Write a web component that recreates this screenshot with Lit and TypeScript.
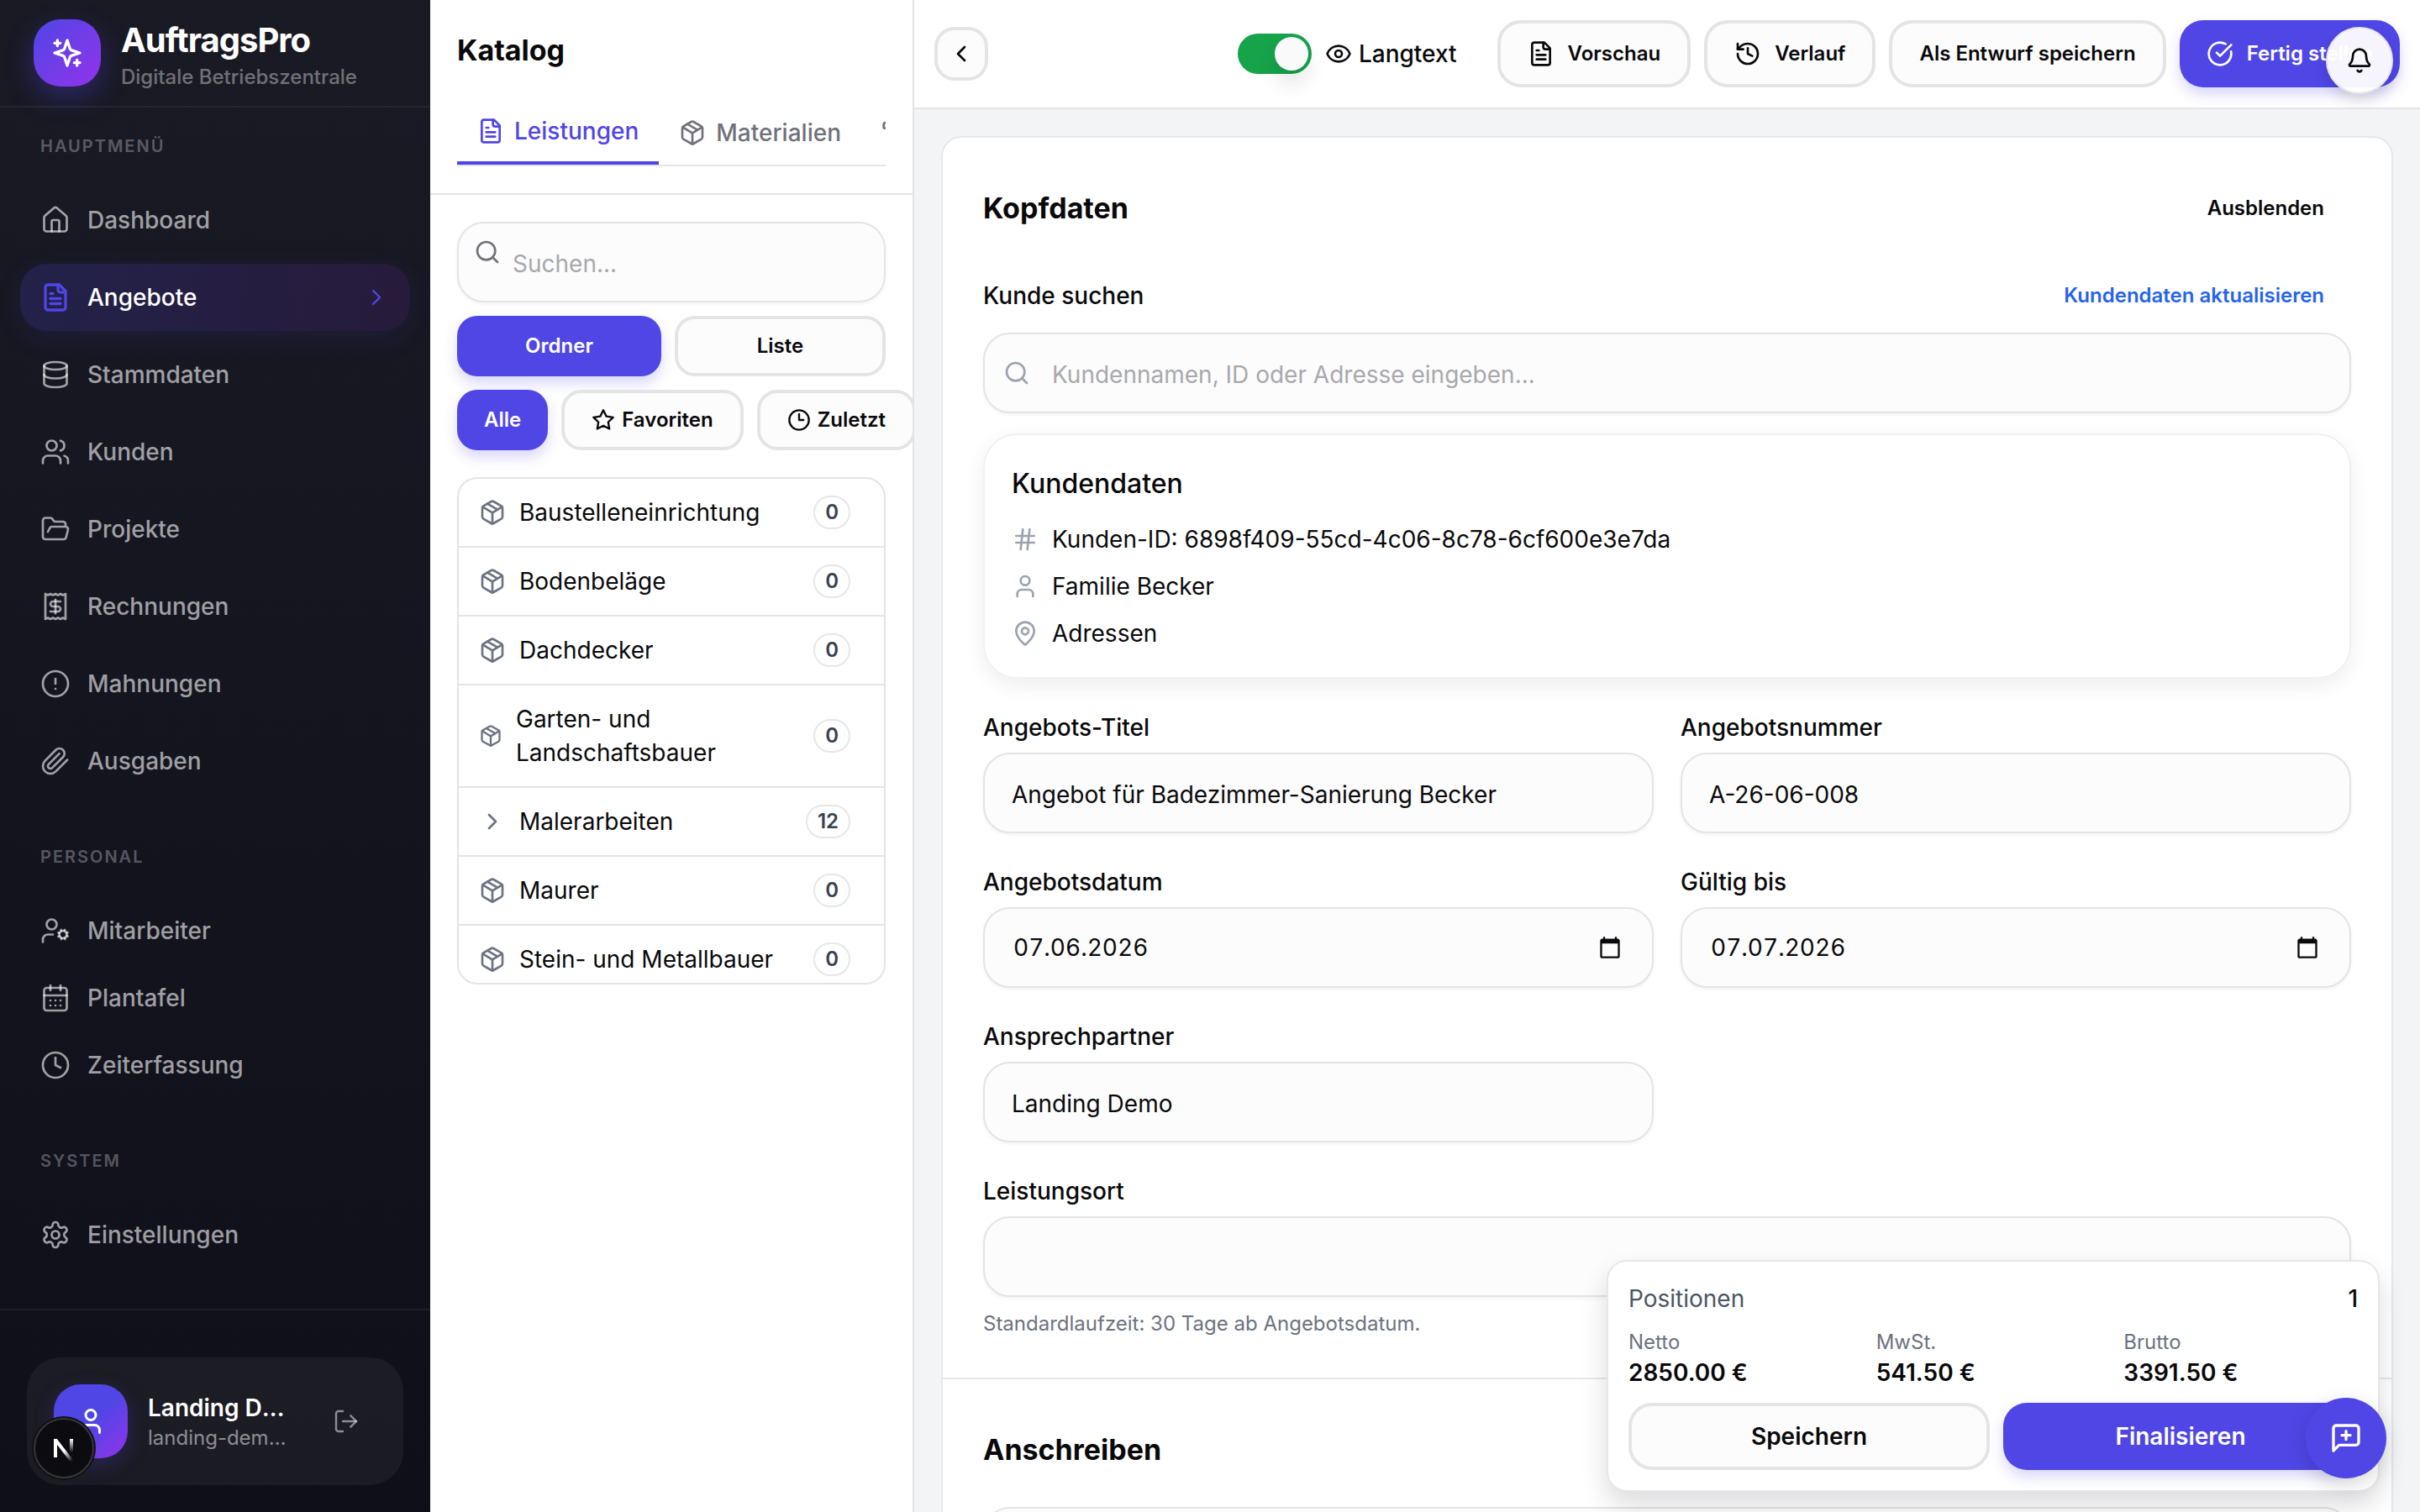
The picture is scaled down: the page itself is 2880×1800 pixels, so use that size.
import { LitElement, html, css, svg, nothing } from "lit";
import { customElement } from "lit/decorators.js";
import { classMap } from "lit/directives/class-map.js";

const shapes = {
  sparkles: svg`<path d="m12 3-1.912 5.813a2 2 0 0 1-1.275 1.275L3 12l5.813 1.912a2 2 0 0 1 1.275 1.275L12 21l1.912-5.813a2 2 0 0 1 1.275-1.275L21 12l-5.813-1.912a2 2 0 0 1-1.275-1.275L12 3Z"/><path d="M5 3v4M19 17v4M3 5h4M17 19h4"/>`,
  house: svg`<path d="M15 21v-8a1 1 0 0 0-1-1h-4a1 1 0 0 0-1 1v8"/><path d="M3 10a2 2 0 0 1 .709-1.528l7-5.999a2 2 0 0 1 2.582 0l7 5.999A2 2 0 0 1 21 10v9a2 2 0 0 1-2 2H5a2 2 0 0 1-2-2z"/>`,
  file: svg`<path d="M15 2H6a2 2 0 0 0-2 2v16a2 2 0 0 0 2 2h12a2 2 0 0 0 2-2V7Z"/><path d="M14 2v4a2 2 0 0 0 2 2h4"/><path d="M10 9H8M16 13H8M16 17H8"/>`,
  database: svg`<ellipse cx="12" cy="5" rx="9" ry="3"/><path d="M3 5V19A9 3 0 0 0 21 19V5"/><path d="M3 12A9 3 0 0 0 21 12"/>`,
  users: svg`<path d="M16 21v-2a4 4 0 0 0-4-4H6a4 4 0 0 0-4 4v2"/><circle cx="9" cy="7" r="4"/><path d="M22 21v-2a4 4 0 0 0-3-3.87"/><path d="M16 3.13a4 4 0 0 1 0 7.75"/>`,
  folder: svg`<path d="m6 14 1.5-2.9A2 2 0 0 1 9.24 10H20a2 2 0 0 1 1.94 2.5l-1.54 6a2 2 0 0 1-1.95 1.5H4a2 2 0 0 1-2-2V5a2 2 0 0 1 2-2h3.9a2 2 0 0 1 1.69.9l.81 1.2a2 2 0 0 0 1.67.9H18a2 2 0 0 1 2 2v2"/>`,
  receipt: svg`<path d="M4 2v20l2-1 2 1 2-1 2 1 2-1 2 1 2-1 2 1V2l-2 1-2-1-2 1-2-1-2 1-2-1-2 1Z"/><path d="M16 8h-6a2 2 0 1 0 0 4h4a2 2 0 1 1 0 4H8"/><path d="M12 17.5v-11"/>`,
  alert: svg`<circle cx="12" cy="12" r="10"/><path d="M12 8v4M12 16h.01"/>`,
  clip: svg`<path d="m21.44 11.05-9.19 9.19a6 6 0 0 1-8.49-8.49l8.57-8.57A4 4 0 1 1 18 8.84l-8.59 8.57a2 2 0 0 1-2.83-2.83l8.49-8.48"/>`,
  userCog: svg`<circle cx="18" cy="15" r="3"/><circle cx="9" cy="7" r="4"/><path d="M10 15H6a4 4 0 0 0-4 4v2"/><path d="m21.7 16.4-.9-.3"/><path d="m15.2 13.9-.9-.3"/><path d="m16.6 18.7.3-.9"/><path d="m19.1 12.2.3-.9"/><path d="m19.6 18.7-.4-1"/><path d="m16.8 12.3-.4-1"/><path d="m14.3 16.6 1-.4"/><path d="m20.7 13.8 1-.4"/>`,
  calendar: svg`<path d="M8 2v4"/><path d="M16 2v4"/><rect width="18" height="18" x="3" y="4" rx="2"/><path d="M3 10h18"/><path d="M8 14h.01M12 14h.01M16 14h.01M8 18h.01M12 18h.01M16 18h.01"/>`,
  clock: svg`<circle cx="12" cy="12" r="10"/><path d="M12 6v6l4 2"/>`,
  clock3: svg`<circle cx="12" cy="12" r="10"/><path d="M12 6v6h4.5"/>`,
  settings: svg`<path d="M12.22 2h-.44a2 2 0 0 0-2 2v.18a2 2 0 0 1-1 1.73l-.43.25a2 2 0 0 1-2 0l-.15-.08a2 2 0 0 0-2.73.73l-.22.38a2 2 0 0 0 .73 2.73l.15.1a2 2 0 0 1 1 1.72v.51a2 2 0 0 1-1 1.74l-.15.09a2 2 0 0 0-.73 2.73l.22.38a2 2 0 0 0 2.73.73l.15-.08a2 2 0 0 1 2 0l.43.25a2 2 0 0 1 1 1.73V20a2 2 0 0 0 2 2h.44a2 2 0 0 0 2-2v-.18a2 2 0 0 1 1-1.73l.43-.25a2 2 0 0 1 2 0l.15.08a2 2 0 0 0 2.73-.73l.22-.39a2 2 0 0 0-.73-2.73l-.15-.08a2 2 0 0 1-1-1.74v-.5a2 2 0 0 1 1-1.74l.15-.09a2 2 0 0 0 .73-2.73l-.22-.38a2 2 0 0 0-2.73-.73l-.15.08a2 2 0 0 1-2 0l-.43-.25a2 2 0 0 1-1-1.73V4a2 2 0 0 0-2-2z"/><circle cx="12" cy="12" r="3"/>`,
  user: svg`<path d="M19 21v-2a4 4 0 0 0-4-4H9a4 4 0 0 0-4 4v2"/><circle cx="12" cy="7" r="4"/>`,
  logout: svg`<path d="M9 21H5a2 2 0 0 1-2-2V5a2 2 0 0 1 2-2h4"/><path d="m16 17 5-5-5-5"/><path d="M21 12H9"/>`,
  box: svg`<path d="M11 21.73a2 2 0 0 0 2 0l7-4A2 2 0 0 0 21 16V8a2 2 0 0 0-1-1.73l-7-4a2 2 0 0 0-2 0l-7 4A2 2 0 0 0 3 8v8a2 2 0 0 0 1 1.73z"/><path d="M12 22V12"/><path d="m3.3 7 7.703 4.734a2 2 0 0 0 1.994 0L20.7 7"/><path d="m7.5 4.27 9 5.15"/>`,
  scroll: svg`<path d="M15 12h-5M15 8h-5"/><path d="M19 17V5a2 2 0 0 0-2-2H4"/><path d="M8 21h12a2 2 0 0 0 2-2v-1a1 1 0 0 0-1-1H11a1 1 0 0 0-1 1v1a2 2 0 1 1-4 0V5a2 2 0 1 0-4 0v2a1 1 0 0 0 1 1h3"/>`,
  search: svg`<circle cx="11" cy="11" r="8"/><path d="m21 21-4.3-4.3"/>`,
  star: svg`<polygon points="12 2 15.09 8.26 22 9.27 17 14.14 18.18 21.02 12 17.77 5.82 21.02 7 14.14 2 9.27 8.91 8.26 12 2"/>`,
  eye: svg`<path d="M2.062 12.348a1 1 0 0 1 0-.696 10.75 10.75 0 0 1 19.876 0 1 1 0 0 1 0 .696 10.75 10.75 0 0 1-19.876 0"/><circle cx="12" cy="12" r="3"/>`,
  history: svg`<path d="M3 12a9 9 0 1 0 9-9 9.75 9.75 0 0 0-6.74 2.74L3 8"/><path d="M3 3v5h5"/><path d="M12 7v5l4 2"/>`,
  check: svg`<path d="M21.801 10A10 10 0 1 1 17 3.335"/><path d="m9 11 3 3L22 4"/>`,
  bell: svg`<path d="M10.268 21a2 2 0 0 0 3.464 0"/><path d="M3.262 15.326A1 1 0 0 0 4 17h16a1 1 0 0 0 .74-1.673C19.41 13.956 18 12.499 18 8A6 6 0 0 0 6 8c0 4.499-1.411 5.956-2.738 7.326"/>`,
  message: svg`<path d="M21 15a2 2 0 0 1-2 2H7l-4 4V5a2 2 0 0 1 2-2h14a2 2 0 0 1 2 2z"/><path d="M12 7v6M9 10h6"/>`,
  pin: svg`<path d="M20 10c0 4.993-5.539 10.193-7.399 11.799a1 1 0 0 1-1.202 0C9.539 20.193 4 14.993 4 10a8 8 0 0 1 16 0"/><circle cx="12" cy="10" r="3"/>`,
  hash: svg`<path d="M4 9h16M4 15h16M10 3 8 21M16 3l-2 18"/>`,
  left: svg`<path d="m15 18-6-6 6-6"/>`,
  right: svg`<path d="m9 18 6-6-6-6"/>`,
  date: svg`<path fill="currentColor" stroke="none" d="M20 3h-1V1h-2v2H7V1H5v2H4c-1.1 0-2 .9-2 2v16c0 1.100.9 2 2 2h16c1.100 0 2-.9 2-2V5c0-1.100-.9-2-2-2zm0 18H4V8h16v13z"/>`,
};

type Shape = keyof typeof shapes;

const icon = (name: Shape, size = "i32") => html`<svg
  class="icon ${size}"
  viewBox="0 0 24 24"
  aria-hidden="true"
>${shapes[name]}</svg>`;

const shared = css`
  :host {
    box-sizing: border-box;
    font-family: Inter, "Liberation Sans", sans-serif;
  }
  *,
  *::before,
  *::after {
    box-sizing: border-box;
  }
  button,
  input,
  textarea {
    font: inherit;
    color: inherit;
    margin: 0;
  }
  button {
    cursor: pointer;
    background: none;
    border: 0;
    padding: 0;
  }
  a {
    color: inherit;
    text-decoration: none;
  }
  h1,
  h2,
  h3,
  p,
  ul,
  dl,
  dd {
    margin: 0;
    padding: 0;
  }
  ul {
    list-style: none;
  }
  .icon {
    display: block;
    fill: none;
    stroke: currentColor;
    stroke-width: 2;
    stroke-linecap: round;
    stroke-linejoin: round;
  }
  .i28 {
    width: 28px;
    height: 28px;
  }
  .i32 {
    width: 32px;
    height: 32px;
  }
  .i36 {
    width: 36px;
    height: 36px;
  }
  .i40 {
    width: 40px;
    height: 40px;
  }
  .btn {
    display: inline-flex;
    align-items: center;
    justify-content: center;
    flex: none;
    height: 80px;
    padding: 0 32px;
    gap: 16px;
    border-radius: 28px;
    font-size: 24px;
    line-height: 32px;
    font-weight: 600;
    white-space: nowrap;
  }
  .outline {
    border: 4px solid #e4e4e7;
    background: #fcfcfc;
    color: #09090b;
  }
  .primary {
    background: #4f46e5;
    color: #fff;
    box-shadow: 0 8px 16px rgba(79, 70, 229, 0.22);
  }
  .small {
    height: 72px;
    gap: 8px;
    border-radius: 24px;
  }
  .field {
    display: block;
    width: 100%;
    height: 96px;
    padding: 4px 32px 0;
    border: 2px solid #e4e4e7;
    border-radius: 32px;
    background: #fcfcfc;
    box-shadow: 0 2px 4px rgba(0, 0, 0, 0.05);
    font-size: 28px;
    line-height: 40px;
    color: #09090b;
    outline: none;
  }
  .field::placeholder {
    color: #a8a8ad;
    opacity: 1;
  }
`;

interface NavEntry {
  icon: Shape;
  label: string;
  active?: boolean;
}

const navGroups: { title: string; dense?: boolean; entries: NavEntry[] }[] = [
  {
    title: "Hauptmenü",
    entries: [
      { icon: "house", label: "Dashboard" },
      { icon: "file", label: "Angebote", active: true },
      { icon: "database", label: "Stammdaten" },
      { icon: "users", label: "Kunden" },
      { icon: "folder", label: "Projekte" },
      { icon: "receipt", label: "Rechnungen" },
      { icon: "alert", label: "Mahnungen" },
      { icon: "clip", label: "Ausgaben" },
    ],
  },
  {
    title: "Personal",
    dense: true,
    entries: [
      { icon: "userCog", label: "Mitarbeiter" },
      { icon: "calendar", label: "Plantafel" },
      { icon: "clock", label: "Zeiterfassung" },
    ],
  },
  {
    title: "System",
    dense: true,
    entries: [{ icon: "settings", label: "Einstellungen" }],
  },
];

@customElement("app-sidebar")
export class AppSidebar extends LitElement {
  static styles = [
    shared,
    css`
      :host {
        display: flex;
        flex-direction: column;
        position: relative;
        min-height: 0;
        background: linear-gradient(180deg, #1a1a25 0%, #0f0f19 100%);
        color: rgba(255, 255, 255, 0.6);
      }
      .brand {
        display: flex;
        align-items: center;
        gap: 24px;
        height: 128px;
        padding: 0 40px;
        border-bottom: 2px solid rgba(255, 255, 255, 0.06);
      }
      .mark {
        display: grid;
        place-items: center;
        flex: none;
        width: 80px;
        height: 80px;
        border-radius: 32px;
        color: #fff;
        background: linear-gradient(135deg, #4f46e5, #9333ea);
        box-shadow: 0 12px 32px rgba(79, 70, 229, 0.35);
      }
      .names {
        padding-top: 6px;
      }
      .name {
        font-size: 40px;
        line-height: 52px;
        font-weight: 700;
        letter-spacing: -0.025em;
        color: #fff;
      }
      .claim {
        font-size: 24px;
        line-height: 36px;
        font-weight: 500;
        color: rgba(255, 255, 255, 0.4);
      }
      nav {
        flex: 1;
        min-height: 0;
        overflow: hidden;
        padding: 32px 24px 0;
      }
      .group + .group {
        margin-top: 60px;
      }
      .title {
        padding: 0 24px;
        margin-bottom: 32px;
        font-size: 20px;
        line-height: 28px;
        font-weight: 600;
        letter-spacing: 0.1em;
        text-transform: uppercase;
        color: rgba(255, 255, 255, 0.3);
      }
      .list {
        display: flex;
        flex-direction: column;
        gap: 12px;
        padding-top: 2px;
      }
      .dense .list {
        gap: 0;
      }
      .link {
        display: flex;
        align-items: center;
        gap: 20px;
        height: 80px;
        padding: 0 24px;
        border-radius: 32px;
        font-size: 28px;
        line-height: 40px;
        font-weight: 500;
      }
      .link .icon {
        stroke-width: 1.8;
      }
      .active {
        color: #fff;
        background: linear-gradient(90deg, rgba(79, 70, 229, 0.2), rgba(147, 51, 234, 0.12));
        box-shadow: 0 8px 32px rgba(79, 70, 229, 0.12);
      }
      .active .icon {
        stroke-width: 2.2;
        color: #4f46e5;
      }
      .link .i32 {
        margin-left: auto;
        margin-right: -8px;
        padding-right: 0;
        stroke-width: 1.8;
      }
      .active .i32 {
        margin-right: 0;
      }
      .foot {
        padding: 56px 32px 32px;
        border-top: 2px solid rgba(255, 255, 255, 0.06);
      }
      .account {
        display: flex;
        align-items: center;
        gap: 24px;
        height: 152px;
        padding: 0 32px;
        border-radius: 40px;
        background: rgba(255, 255, 255, 0.05);
      }
      .avatar {
        display: grid;
        place-items: center;
        flex: none;
        width: 88px;
        height: 88px;
        border-radius: 32px;
        color: #fff;
        background: linear-gradient(135deg, #4f46e5 50%, #9333ea);
        box-shadow: 0 8px 24px rgba(79, 70, 229, 0.25);
      }
      .who {
        flex: 1;
        min-width: 0;
        padding-top: 4px;
      }
      .who p {
        overflow: hidden;
        white-space: nowrap;
        text-overflow: ellipsis;
      }
      .person {
        font-size: 28px;
        line-height: 36px;
        font-weight: 600;
        color: #fff;
      }
      .mail {
        font-size: 24px;
        line-height: 36px;
        color: rgba(255, 255, 255, 0.5);
      }
      .leave {
        flex: none;
        padding: 20px;
        color: rgba(255, 255, 255, 0.5);
      }
      .leave .icon {
        stroke-width: 1.8;
      }
      .dev {
        position: absolute;
        left: 40px;
        bottom: 40px;
        width: 72px;
        height: 72px;
        border-radius: 50%;
        background: #0c0c10;
        border: 2px solid #36363b;
        box-shadow: 0 0 0 2px #111114;
      }
      .dev svg {
        display: block;
        width: 68px;
        height: 68px;
      }
    `,
  ];

  render() {
    return html`
      <div class="brand">
        <div class="mark">${icon("sparkles", "i40")}</div>
        <div class="names">
          <p class="name">AuftragsPro</p>
          <p class="claim">Digitale Betriebszentrale</p>
        </div>
      </div>
      <nav aria-label="Navigation">
        ${navGroups.map(
          (group) => html`
            <div class=${classMap({ group: true, dense: !!group.dense })}>
              <p class="title">${group.title}</p>
              <ul class="list">
                ${group.entries.map(
                  (entry) => html`
                    <li>
                      <a
                        href="#"
                        class=${classMap({ link: true, active: !!entry.active })}
                        aria-current=${entry.active ? "page" : nothing}
                      >
                        ${icon(entry.icon, "i36")}
                        <span>${entry.label}</span>
                        ${entry.active ? icon("right") : nothing}
                      </a>
                    </li>
                  `,
                )}
              </ul>
            </div>
          `,
        )}
      </nav>
      <div class="foot">
        <div class="account">
          <div class="avatar">${icon("user", "i36")}</div>
          <div class="who">
            <p class="person">Landing Demo</p>
            <p class="mail">landing-demo@auftragspro.de</p>
          </div>
          <button class="leave" aria-label="Abmelden">${icon("logout")}</button>
        </div>
      </div>
      <button class="dev" aria-label="Entwicklerwerkzeuge">
        <svg viewBox="0 0 68 68" fill="none" aria-hidden="true">
          <defs>
            <linearGradient id="diag" gradientUnits="userSpaceOnUse" x1="35" y1="37" x2="44" y2="49">
              <stop stop-color="#fff" />
              <stop offset="1" stop-color="#fff" stop-opacity="0" />
            </linearGradient>
            <linearGradient id="side" gradientUnits="userSpaceOnUse" x1="43" y1="23" x2="43" y2="39">
              <stop stop-color="#fff" />
              <stop offset="1" stop-color="#fff" stop-opacity="0" />
            </linearGradient>
          </defs>
          <line x1="24" y1="23" x2="24" y2="45" stroke="#fff" stroke-width="4" />
          <line x1="24" y1="24" x2="44" y2="50" stroke="url(#diag)" stroke-width="4" />
          <line x1="43" y1="23" x2="43" y2="39" stroke="url(#side)" stroke-width="4" />
        </svg>
      </button>
    `;
  }
}

const folders: { label: string; count: number; nested?: boolean }[] = [
  { label: "Baustelleneinrichtung", count: 0 },
  { label: "Bodenbeläge", count: 0 },
  { label: "Dachdecker", count: 0 },
  { label: "Garten- und Landschaftsbauer", count: 0 },
  { label: "Malerarbeiten", count: 12, nested: true },
  { label: "Maurer", count: 0 },
  { label: "Stein- und Metallbauer", count: 0 },
];

@customElement("app-catalog")
export class AppCatalog extends LitElement {
  static styles = [
    shared,
    css`
      :host {
        display: block;
        min-height: 0;
        overflow: hidden;
        background: #fff;
        border-right: 2px solid #e4e4e7;
        color: #09090b;
      }
      .head {
        padding: 32px;
        border-bottom: 2px solid #e4e4e7;
      }
      h2 {
        font-size: 34px;
        line-height: 56px;
        font-weight: 700;
      }
      .tabs {
        display: flex;
        margin-top: 32px;
        overflow: hidden;
        border-bottom: 2px solid #e4e4e7;
      }
      .tab {
        display: flex;
        align-items: center;
        flex: none;
        gap: 12px;
        height: 76px;
        padding: 0 24px;
        font-size: 28px;
        line-height: 40px;
        font-weight: 500;
        color: #71717a;
      }
      .selected {
        color: #4f46e5;
        border-bottom: 4px solid #4f46e5;
      }
      .body {
        display: flex;
        flex-direction: column;
        gap: 16px;
        padding: 32px;
      }
      .search {
        position: relative;
      }
      .search .icon {
        position: absolute;
        left: 20px;
        top: 20px;
        color: #71717a;
      }
      .search .field {
        padding-left: 64px;
      }
      .row {
        display: flex;
        gap: 16px;
      }
      .grow {
        flex: 1;
      }
      .list {
        height: 604px;
        margin-top: 16px;
        overflow: hidden;
        border: 2px solid #e4e4e7;
        border-radius: 24px;
      }
      .folder {
        display: flex;
        align-items: center;
        justify-content: space-between;
        gap: 16px;
        width: 100%;
        padding: 20px 40px 20px 24px;
        text-align: left;
        font-size: 28px;
        line-height: 40px;
      }
      li + li .folder {
        border-top: 2px solid #e4e4e7;
      }
      .label {
        display: flex;
        align-items: center;
        gap: 16px;
        min-width: 0;
      }
      .label .icon {
        color: #6b7280;
        min-width: 28px;
      }
      .count {
        flex: none;
        padding: 0 12px;
        border: 2px solid #e5e7eb;
        border-radius: 20px;
        font-size: 24px;
        line-height: 36px;
        font-weight: 600;
        color: #374151;
      }
    `,
  ];

  render() {
    return html`
      <div class="head">
        <h2>Katalog</h2>
        <div class="tabs" role="tablist">
          <button class="tab selected" role="tab" aria-selected="true">${icon("file")}Leistungen</button>
          <button class="tab" role="tab" aria-selected="false">${icon("box")}Materialien</button>
          <button class="tab" role="tab" aria-selected="false" aria-label="Texte">${icon("scroll")}</button>
        </div>
      </div>
      <div class="body">
        <div class="search">
          <input class="field" type="search" placeholder="Suchen..." aria-label="Suchen" />
          ${icon("search")}
        </div>
        <div class="row">
          <button class="btn small primary grow">Ordner</button>
          <button class="btn small outline grow">Liste</button>
        </div>
        <div class="row">
          <button class="btn small primary">Alle</button>
          <button class="btn small outline">${icon("star", "i28")}Favoriten</button>
          <button class="btn small outline">${icon("clock3", "i28")}Zuletzt</button>
        </div>
        <ul class="list">
          ${folders.map(
            (folder) => html`
              <li>
                <button class="folder">
                  <span class="label">
                    ${icon(folder.nested ? "right" : "box")}
                    <span>${folder.label}</span>
                  </span>
                  <span class="count">${folder.count}</span>
                </button>
              </li>
            `,
          )}
        </ul>
      </div>
    `;
  }
}

@customElement("app-toolbar")
export class AppToolbar extends LitElement {
  static styles = [
    shared,
    css`
      :host {
        display: flex;
        align-items: center;
        flex: none;
        gap: 16px;
        height: 130px;
        padding: 0 24px;
        background: #fff;
        border-bottom: 2px solid #e4e4e7;
        color: #09090b;
      }
      .back {
        width: 64px;
        height: 64px;
        padding: 0;
        border-radius: 24px;
        margin-right: auto;
      }
      .switch {
        display: flex;
        align-items: center;
        gap: 16px;
        margin-right: 32px;
        font-size: 28px;
        line-height: 40px;
        font-weight: 500;
      }
      .switch span {
        display: flex;
        align-items: center;
        gap: 8px;
      }
      .toggle {
        appearance: none;
        width: 88px;
        height: 48px;
        margin: 0;
        padding: 4px;
        border-radius: 24px;
        background: #d4d4d8;
      }
      .toggle::before {
        content: "";
        display: block;
        width: 40px;
        height: 40px;
        border-radius: 50%;
        background: #fafafa;
        box-shadow: 0 16px 24px rgba(0, 0, 0, 0.1);
      }
      .toggle:checked {
        background: #16a34a;
      }
      .toggle:checked::before {
        margin-left: auto;
      }
    `,
  ];

  render() {
    return html`
      <button class="btn outline back" aria-label="Zurück">${icon("left")}</button>
      <label class="switch">
        <input class="toggle" type="checkbox" role="switch" checked />
        <span>${icon("eye")}Langtext</span>
      </label>
      <button class="btn outline">${icon("file")}Vorschau</button>
      <button class="btn outline">${icon("history")}Verlauf</button>
      <button class="btn outline">Als Entwurf speichern</button>
      <button class="btn primary">${icon("check")}Fertig stellen</button>
    `;
  }
}

@customElement("app-offer-form")
export class AppOfferForm extends LitElement {
  static styles = [
    shared,
    css`
      :host {
        display: block;
        flex: 1;
        min-height: 0;
        overflow: hidden;
        padding: 32px;
        background: #f3f4f6;
        color: #09090b;
      }
      .card {
        background: #fff;
        border: 2px solid #e5e7eb;
        border-radius: 24px;
      }
      .part {
        padding: 48px;
      }
      .part + .part {
        border-top: 2px solid #e5e7eb;
      }
      .line {
        display: flex;
        align-items: center;
        justify-content: space-between;
        height: 72px;
      }
      .gap {
        margin-top: 32px;
      }
      h2 {
        font-size: 34px;
        line-height: 48px;
        font-weight: 700;
      }
      .plain {
        height: 72px;
      }
      .refresh {
        color: #2563eb;
      }
      label {
        font-size: 28px;
        line-height: 44px;
        font-weight: 500;
      }
      .search {
        position: relative;
        margin-top: 8px;
      }
      .search .icon {
        position: absolute;
        left: 24px;
        top: 32px;
        color: #9ca3af;
      }
      .search .field {
        padding-left: 80px;
      }
      .customer {
        margin-top: 24px;
        padding: 32px;
        border: 2px solid #f1f1f2;
        border-radius: 40px;
        box-shadow: 0 8px 24px rgba(0, 0, 0, 0.07);
      }
      h3 {
        margin-bottom: 20px;
        font-size: 32px;
        line-height: 52px;
        font-weight: 500;
      }
      .facts {
        display: flex;
        flex-direction: column;
        gap: 16px;
        font-size: 28px;
        line-height: 40px;
      }
      .facts li {
        display: flex;
        align-items: center;
        gap: 16px;
      }
      .facts .icon {
        color: #9ca3af;
      }
      .grid {
        display: grid;
        grid-template-columns: 1fr 1fr;
        gap: 36px 32px;
        margin-top: 36px;
      }
      .cell {
        display: flex;
        flex-direction: column;
        gap: 8px;
        min-width: 0;
      }
      .wide {
        grid-column: 1 / -1;
      }
      .date {
        position: relative;
      }
      .date .field {
        padding: 0 34px;
        font-variant-numeric: tabular-nums;
      }
      .date button {
        position: absolute;
        right: 38px;
        top: 34px;
      }
      .hint {
        margin-top: 16px;
        font-size: 24px;
        line-height: 32px;
        color: #6b7280;
      }
      .letter {
        height: 320px;
        padding-top: 24px;
        resize: none;
      }
    `,
  ];

  private text(id: string, label: string, value: string, wide = false) {
    return html`
      <div class=${classMap({ cell: true, wide })}>
        <label for=${id}>${label}</label>
        <input class="field" id=${id} type="text" .value=${value} />
      </div>
    `;
  }

  private date(id: string, label: string, value: string) {
    return html`
      <div class="cell">
        <label for=${id}>${label}</label>
        <div class="date">
          <input class="field" id=${id} type="text" inputmode="numeric" .value=${value} />
          <button aria-label="Kalender öffnen">${icon("date", "i28")}</button>
        </div>
      </div>
    `;
  }

  render() {
    return html`
      <div class="card">
        <section class="part">
          <div class="line">
            <h2>Kopfdaten</h2>
            <button class="btn plain">Ausblenden</button>
          </div>
          <div class="line gap">
            <label for="customer">Kunde suchen</label>
            <button class="btn plain refresh">Kundendaten aktualisieren</button>
          </div>
          <div class="search">
            <input
              class="field"
              id="customer"
              type="search"
              placeholder="Kundennamen, ID oder Adresse eingeben..."
            />
            ${icon("search")}
          </div>
          <div class="customer">
            <h3>Kundendaten</h3>
            <ul class="facts">
              <li>${icon("hash")}Kunden-ID: 6898f409-55cd-4c06-8c78-6cf600e3e7da</li>
              <li>${icon("user")}Familie Becker</li>
              <li>${icon("pin")}Adressen</li>
            </ul>
          </div>
          <div class="grid">
            ${this.text("title", "Angebots-Titel", "Angebot für Badezimmer-Sanierung Becker")}
            ${this.text("number", "Angebotsnummer", "A-26-06-008")}
            ${this.date("issued", "Angebotsdatum", "07.06.2026")}
            ${this.date("valid", "Gültig bis", "07.07.2026")}
            ${this.text("contact", "Ansprechpartner", "Landing Demo")}
            ${this.text("place", "Leistungsort", "", true)}
          </div>
          <p class="hint">Standardlaufzeit: 30 Tage ab Angebotsdatum.</p>
        </section>
        <section class="part">
          <div class="line">
            <h2>Anschreiben</h2>
          </div>
          <textarea class="field letter gap" aria-label="Anschreiben"></textarea>
        </section>
      </div>
    `;
  }
}

const sums = [
  ["Netto", "2850.00 €"],
  ["MwSt.", "541.50 €"],
  ["Brutto", "3391.50 €"],
];

@customElement("app-summary")
export class AppSummary extends LitElement {
  static styles = [
    shared,
    css`
      :host {
        display: flex;
        flex-direction: column;
        gap: 16px;
        width: 920px;
        padding: 24px;
        background: #fff;
        border: 2px solid #e5e7eb;
        border-radius: 24px;
        box-shadow: 0 16px 32px rgba(0, 0, 0, 0.14);
        font-size: 28px;
        line-height: 40px;
        color: #09090b;
      }
      .top {
        display: flex;
        justify-content: space-between;
        color: #4b5563;
      }
      .top strong {
        font-weight: 500;
        color: #09090b;
      }
      .sums {
        display: grid;
        grid-template-columns: repeat(3, 1fr);
        gap: 16px;
      }
      dt {
        font-size: 24px;
        line-height: 32px;
        color: #6b7280;
      }
      dd {
        font-weight: 600;
      }
      .actions {
        display: flex;
        gap: 16px;
      }
      .actions .btn {
        flex: 1;
        font-size: 28px;
      }
    `,
  ];

  render() {
    return html`
      <div class="top"><span>Positionen</span><strong>1</strong></div>
      <dl class="sums">
        ${sums.map(([name, value]) => html`<div><dt>${name}</dt><dd>${value}</dd></div>`)}
      </dl>
      <div class="actions">
        <button class="btn outline">Speichern</button>
        <button class="btn primary">Finalisieren</button>
      </div>
    `;
  }
}

@customElement("app-root")
export class AppRoot extends LitElement {
  static styles = [
    shared,
    css`
      :host {
        display: grid;
        grid-template-columns: 512px 576px minmax(0, 1fr);
        grid-template-rows: minmax(0, 1fr);
        position: relative;
        height: 100vh;
        overflow: hidden;
        background: #f3f4f6;
      }
      main {
        display: flex;
        flex-direction: column;
        min-width: 0;
        min-height: 0;
      }
      .summary {
        position: absolute;
        right: 48px;
        bottom: 24px;
      }
      .bell,
      .chat {
        display: grid;
        place-items: center;
        position: absolute;
        border-radius: 50%;
      }
      .bell {
        top: 32px;
        right: 32px;
        width: 80px;
        height: 80px;
        border: 2px solid #e4e4e7;
        background: rgba(255, 255, 255, 0.95);
        color: #09090b;
        box-shadow: 0 8px 16px rgba(0, 0, 0, 0.12);
      }
      .chat {
        right: 40px;
        bottom: 40px;
        width: 96px;
        height: 96px;
        background: #4f46e5;
        color: #fff;
        box-shadow: 0 8px 24px rgba(0, 0, 0, 0.15);
      }
    `,
  ];

  render() {
    return html`
      <app-sidebar></app-sidebar>
      <app-catalog></app-catalog>
      <main>
        <app-toolbar></app-toolbar>
        <app-offer-form></app-offer-form>
      </main>
      <app-summary class="summary"></app-summary>
      <button class="bell" aria-label="Benachrichtigungen">${icon("bell")}</button>
      <button class="chat" aria-label="Feedback">${icon("message", "i40")}</button>
    `;
  }
}
